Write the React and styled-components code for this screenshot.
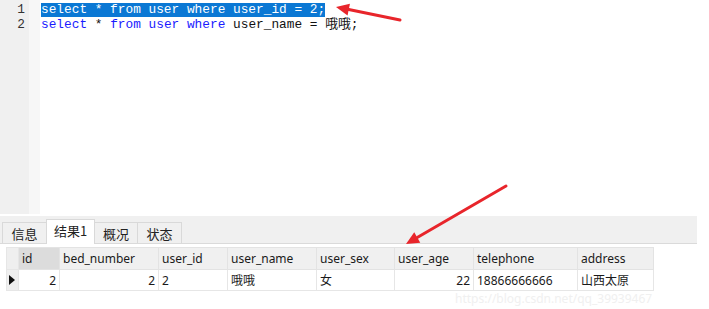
import React from 'react';
import styled, { createGlobalStyle } from 'styled-components';

const GlobalStyle = createGlobalStyle`
  body {
    margin: 0;
    background: #ffffff;
  }
`;

const columns = [
  { name: 'id', width: 41, align: 'right' },
  { name: 'bed_number', width: 99, align: 'right' },
  { name: 'user_id', width: 69, align: 'left' },
  { name: 'user_name', width: 89, align: 'left' },
  { name: 'user_sex', width: 78, align: 'left' },
  { name: 'user_age', width: 79, align: 'right' },
  { name: 'telephone', width: 104, align: 'left' },
  { name: 'address', width: 76, align: 'left' },
];

const row = ['2', '2', '2', '哦哦', '女', '22', '18866666666', '山西太原'];

const tabs = [
  { label: '信息', width: 45 },
  { label: '结果1', width: 49 },
  { label: '概况', width: 44 },
  { label: '状态', width: 45 },
];

const Arrow = ({ x1, y1, x2, y2 }) => {
  // arrowhead drawn as a triangle at (x2, y2)
  const a = Math.atan2(y2 - y1, x2 - x1);
  const len = 13;
  const w = 6;
  const bx = x2 - len * Math.cos(a);
  const by = y2 - len * Math.sin(a);
  const px = -Math.sin(a) * w;
  const py = Math.cos(a) * w;
  return (
    <g>
      <line x1={x1} y1={y1} x2={bx} y2={by} stroke="#e8252b" strokeWidth="3" strokeLinecap="round" />
      <polygon points={`${x2},${y2} ${bx + px},${by + py} ${bx - px},${by - py}`} fill="#e8252b" />
    </g>
  );
};

const App = () => {
  return (
    <Page>
      <GlobalStyle />
      <Editor>
        <Gutter>
          <LineNo>1</LineNo>
          <LineNo>2</LineNo>
        </Gutter>
        <GutterEdge />
        <Code>
          <Line>
            <Selected>select * from user where user_id = 2;</Selected>
          </Line>
          <Line>
            <Kw>select</Kw> * <Kw>from</Kw> <Kw>user</Kw> <Kw>where</Kw> user_name = 哦哦;
          </Line>
        </Code>
      </Editor>
      <Results>
        <TabStrip>
          {tabs.map((t, i) => (
            <Tab key={t.label} $active={i === 1} $width={t.width}>{t.label}</Tab>
          ))}
        </TabStrip>
        <Grid>
          <thead>
            <tr>
              <Corner />
              {columns.map((c, i) => (
                <HeadCell key={c.name} style={{ width: c.width }} $selected={i === 0}>
                  {c.name}
                </HeadCell>
              ))}
            </tr>
          </thead>
          <tbody>
            <tr>
              <Indicator>
                <Triangle />
              </Indicator>
              {row.map((v, i) => (
                <Cell key={i} $align={columns[i].align}>{v}</Cell>
              ))}
            </tr>
          </tbody>
        </Grid>
      </Results>
      <Watermark>https://blog.csdn.net/qq_39939467</Watermark>
      <Overlay width="709" height="309">
        <Arrow x1={400} y1={20} x2={336} y2={7} />
        <Arrow x1={506} y1={186} x2={406} y2={244} />
      </Overlay>
    </Page>
  );
};

const Page = styled.div`
  position: relative;
  width: 709px;
  height: 309px;
  overflow: hidden;
  background: #ffffff;
`;

const Editor = styled.div`
  display: flex;
  height: 214px;
`;

const Gutter = styled.div`
  width: 29px;
  background: #f0f0f0;
  padding-top: 2px;
  box-sizing: border-box;
`;

const LineNo = styled.div`
  height: 15px;
  line-height: 15px;
  text-align: right;
  padding-right: 4px;
  font-family: "Liberation Mono", monospace;
  font-size: 12.8px;
  color: #333;
`;

const GutterEdge = styled.div`
  width: 11px;
  background: #f7f7f7;
`;

const Code = styled.div`
  flex: 1;
  padding-top: 2px;
  padding-left: 1px;
`;

const Line = styled.div`
  height: 15px;
  line-height: 15px;
  font-family: "Liberation Mono", "Noto Sans CJK SC", monospace;
  font-size: 12.8px;
  white-space: pre;
  color: #111;
`;

const Selected = styled.span`
  display: inline-block;
  height: 14px;
  line-height: 14px;
  background: #0b78d4;
  color: #ffffff;
`;

const Kw = styled.span`
  color: #1a1aff;
`;

const Results = styled.div`
  margin-top: 2px;
`;

const TabStrip = styled.div`
  width: 694px;
  height: 27px;
  background: #f0f0f0;
  border-bottom: 1px solid #dadada;
  display: flex;
  align-items: flex-end;
  padding-left: 3px;
`;

const Tab = styled.div`
  width: ${(p) => p.$width}px;
  height: ${(p) => (p.$active ? 25 : 21)}px;
  flex: none;
  display: flex;
  align-items: center;
  justify-content: center;
  box-sizing: border-box;
  padding: 0 0 ${(p) => (p.$active ? 4 : 0)}px;
  background: ${(p) => (p.$active ? '#ffffff' : '#f0f0f0')};
  border: 1px solid #d9d9d9;
  border-bottom: none;
  margin-left: -1px;
  margin-bottom: ${(p) => (p.$active ? -1 : 0)}px;
  font-family: "Noto Sans CJK SC", "Noto Sans", sans-serif;
  font-size: 13px;
  color: #222;
  white-space: nowrap;
`;

const Grid = styled.table`
  margin: 3px 0 0 6px;
  border-collapse: collapse;
  table-layout: fixed;
  font-family: "Noto Sans", "Noto Sans CJK SC", sans-serif;
  font-size: 12px;
  color: #1a1a1a;
`;

const Corner = styled.th`
  width: 11px;
  height: 21px;
  padding: 0;
  background: #efefef;
  border: 1px solid #e6e6e6;
`;

const HeadCell = styled.th`
  height: 21px;
  padding: 0 3px;
  box-sizing: border-box;
  text-align: left;
  font-weight: normal;
  background: ${(p) => (p.$selected ? '#dcdcdc' : '#f0f0f0')};
  border: 1px solid #e3e3e3;
  white-space: nowrap;
`;

const Indicator = styled.td`
  height: 20px;
  padding: 0;
  background: #efefef;
  border: 1px solid #e6e6e6;
  vertical-align: middle;
`;

const Triangle = styled.div`
  width: 0;
  height: 0;
  margin-left: 2px;
  border-top: 5px solid transparent;
  border-bottom: 5px solid transparent;
  border-left: 6px solid #111;
`;

const Cell = styled.td`
  height: 20px;
  padding: 0 3px;
  text-align: ${(p) => p.$align};
  border: 1px solid #e6e6e6;
  white-space: nowrap;
`;

const Watermark = styled.div`
  position: absolute;
  left: 455px;
  top: 292px;
  font-family: "Noto Sans", sans-serif;
  font-size: 12px;
  line-height: 14px;
  color: #f0f0f0;
  white-space: nowrap;
`;

const Overlay = styled.svg`
  position: absolute;
  left: 0;
  top: 0;
  pointer-events: none;
`;

export default App;
